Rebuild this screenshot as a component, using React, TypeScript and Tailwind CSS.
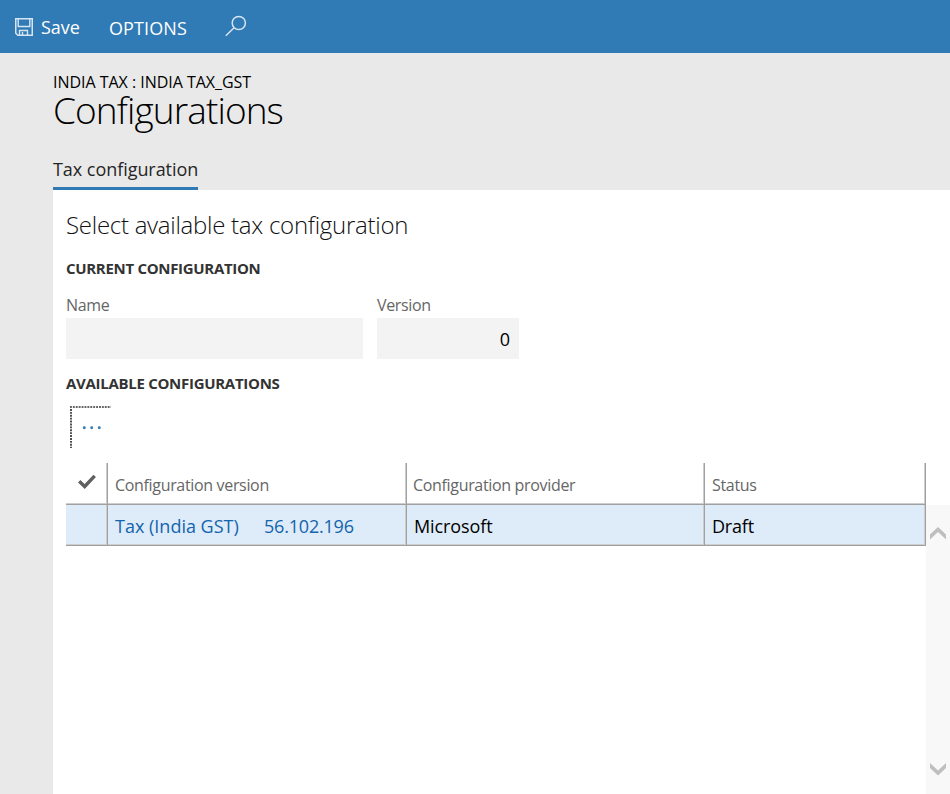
import React from "react";

function SaveIcon() {
  return (
    <svg width="18" height="18" viewBox="0 0 18 18" fill="none" stroke="#d5e5f3" className="block shrink-0">
      <path d="M.75.75h16.5v16.5H2.8L.75 15.2z" strokeWidth="1.5" />
      <path d="M3.2 1v7.5h11.6V1M4.5 17v-4.5h8V17M7.5 14v3" strokeWidth="1.4" />
    </svg>
  );
}

function SearchIcon() {
  return (
    <svg width="22" height="22" viewBox="0 0 22 22" fill="none" stroke="#d5e5f3" strokeWidth="1.5" className="block shrink-0">
      <circle cx="13.8" cy="8" r="6.6" />
      <path d="M9.1 12.7.8 20.8" />
    </svg>
  );
}

function Chevron({ down = false }: { down?: boolean }) {
  return (
    <svg width="16" height="13" viewBox="0 0 16 13" className="block" fill="#bfbfbf">
      {down ? <path d="M0 0l8 7.5L16 0v5l-8 7.5L0 5z" /> : <path d="M0 12.5V7.5L8 0l8 7.5v5L8 5z" />}
    </svg>
  );
}

const cell = "border-r border-[#a0a0a0] shadow-[inset_-1px_0_#cdcdcd]";

export default function App() {
  return (
    <div className="flex h-[794px] w-[950px] flex-col overflow-hidden bg-[#e9e9e9] font-['Open_Sans','Noto_Sans',sans-serif] whitespace-nowrap text-black">
      <header className="flex h-[53px] shrink-0 items-start bg-[#307ab5] text-white">
        <button className="flex w-[109px] pt-[18px] pl-[15px]">
          <SaveIcon />
          <span className="-mt-[3px] ml-2 text-[18px] leading-6">Save</span>
        </button>
        <button className="w-[116px] pt-4 text-left text-[18px] leading-6 tracking-[0.1px]">OPTIONS</button>
        <button className="pt-[15px]"><SearchIcon /></button>
      </header>

      <div className="flex h-[137px] shrink-0 flex-col items-start pt-[19px] pl-[53px]">
        <div className="h-5 text-[16px] leading-5 tracking-[-0.03px]">INDIA TAX : INDIA TAX_GST</div>
        <h1 className="h-9 text-[37px] leading-9 font-light tracking-[-0.9px]">Configurations</h1>
        <div className="mt-[29px] h-[33px] w-[145px] border-b-[3px] border-[#307ab5] text-[18px] leading-6 tracking-[-0.05px] text-[#262626]">
          Tax configuration
        </div>
      </div>

      <main className="ml-[53px] flex grow flex-col bg-white pl-[13px]">
        <h2 className="mt-[19px] h-8 text-[24px] leading-8 font-light tracking-[-0.27px] text-[#111]">Select available tax configuration</h2>
        <h3 className="mt-[17px] h-5 text-[15px] leading-5 font-bold tracking-[-0.31px] text-[#333]">CURRENT CONFIGURATION</h3>
        <div className="mt-[17px] flex gap-[14px] text-[16px] leading-5 tracking-[-0.33px] text-[#666]">
          <div className="w-[297px]">
            <div className="h-[23px]">Name</div>
            <div className="h-[41px] bg-[#f3f3f3]" />
          </div>
          <div className="w-[142px]">
            <div className="h-[23px]">Version</div>
            <div className="h-[41px] bg-[#f3f3f3] pt-[9px] pr-[9px] text-right text-[18px] leading-6 tracking-normal text-black">0</div>
          </div>
        </div>
        <h3 className="mt-[14px] h-5 text-[15px] leading-5 font-bold tracking-[-0.29px] text-[#333]">AVAILABLE CONFIGURATIONS</h3>
        <button className="mt-[13px] ml-1 h-[42px] w-[41px]">
          <svg width="41" height="42" viewBox="0 0 41 42" fill="#307ab5" className="block">
            <path d="M0 1h41M1 3v39" fill="none" stroke="#333" strokeWidth="1.7" strokeDasharray="1.9 1" />
            <circle cx="14.3" cy="21.8" r="1.45" />
            <circle cx="21.7" cy="21.8" r="1.45" />
            <circle cx="29.3" cy="21.8" r="1.45" />
          </svg>
        </button>

        <div className="mt-[15px] flex grow">
          <div className="w-[860px]">
            <div className="border-b border-[#a0a0a0]">
              <div className="grid h-[41px] grid-cols-[42px_299px_298px_221px] text-[16px] leading-5 tracking-[-0.33px] text-[#666] shadow-[inset_0_-1px_#cdcdcd]">
                <div className={`${cell} pt-[11px] pl-3`}>
                  <svg width="18" height="15" viewBox="0 0 18 15" fill="none" stroke="#606060" strokeWidth="3.4" className="block">
                    <path d="M1.2 7.2l5.5 5.3L16.7 1.8" />
                  </svg>
                </div>
                <div className={`${cell} pt-3 pl-[7px]`}>Configuration version</div>
                <div className={`${cell} pt-3 pl-[6px]`}>Configuration provider</div>
                <div className={`${cell} pt-3 pl-[7px]`}>Status</div>
              </div>
            </div>
            <div className="border-b border-[#a0a0a0]">
              <div className="grid h-10 grid-cols-[42px_299px_298px_221px] bg-[#deebf8] text-[18px] leading-6 tracking-[-0.2px] shadow-[inset_0_-1px_#cdcdcd]">
                <div className={cell} />
                <div className={`${cell} flex pt-[9px] pl-[7px] text-[#1264ad]`}>
                  <span className="w-[149px] tracking-normal">Tax (India GST)</span>
                  <span>56.102.196</span>
                </div>
                <div className={`${cell} pt-[9px] pl-[7px] tracking-[-0.1px]`}>Microsoft</div>
                <div className={`${cell} pt-[9px] pl-[7px]`}>Draft</div>
              </div>
            </div>
          </div>
          <div className="mt-[42px] flex w-6 flex-col items-center justify-between bg-[#f8f8f8] pt-[22px] pb-[18px]">
            <Chevron />
            <Chevron down />
          </div>
        </div>
      </main>
    </div>
  );
}
